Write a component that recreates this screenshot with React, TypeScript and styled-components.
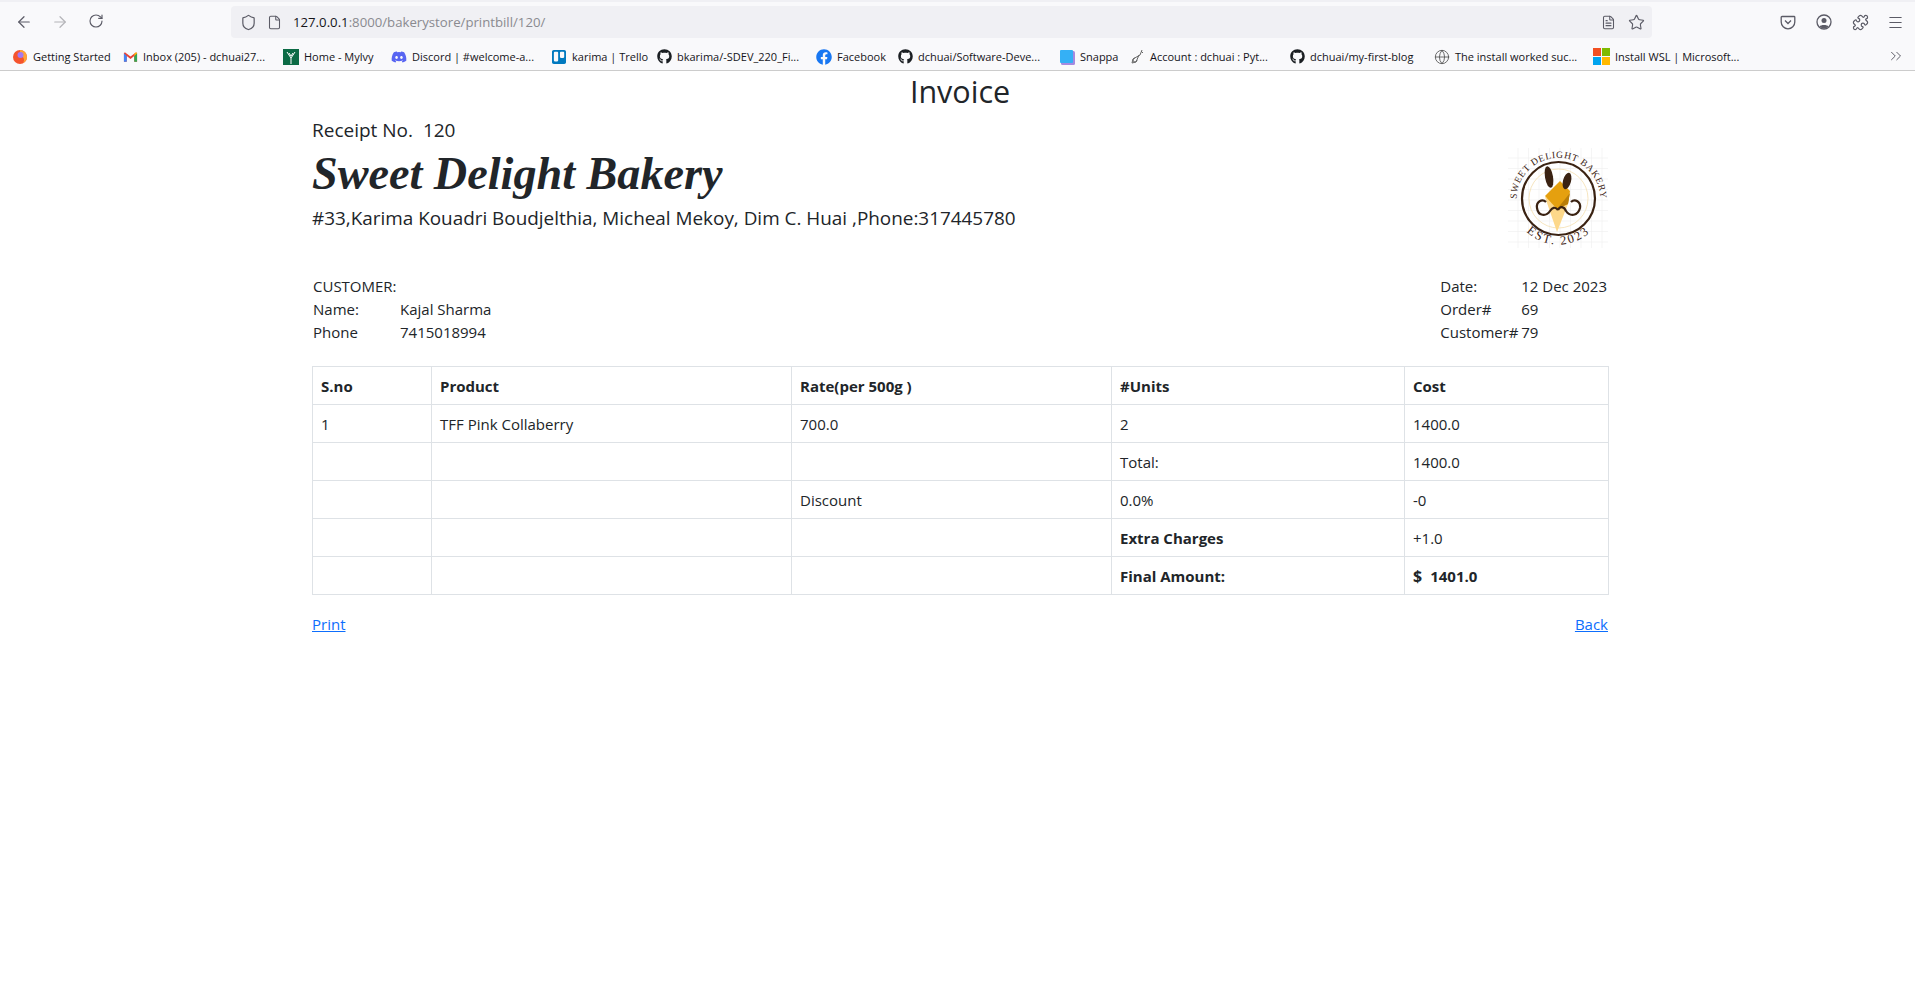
import React from "react";
import styled, { createGlobalStyle } from "styled-components";
import { ArrowLeft, ArrowRight, RotateCw, Shield, File, Star, Menu, ChevronsRight, Globe, Puzzle, FileText } from "lucide-react";
import { FaGithub, FaFacebook, FaDiscord, FaTrello } from "react-icons/fa";

const GlobalStyle = createGlobalStyle`
  html, body { margin: 0; padding: 0; background: #fff; }
  body { font-family: "Open Sans", "Noto Sans", sans-serif; color: #212529; }
`;

const Chrome = styled.div`
  background: #f9f9fb;
  border-bottom: 1px solid #ccc;
  height: 68px;
  border-top: 2px solid #f0f0f4;
  box-sizing: content-box;
`;

const Toolbar = styled.div`
  height: 39px;
  display: flex;
  align-items: center;
  padding-top: 1px;
  box-sizing: border-box;
`;

const NavIcon = styled.span<{ $dim?: boolean; $w?: number }>`
  width: ${(p) => p.$w ?? 36}px;
  display: flex;
  justify-content: center;
  color: ${(p) => (p.$dim ? "#b4b4b8" : "#5b5b66")};
`;

const NavGroup = styled.div`
  display: flex;
  width: 231px;
  padding-left: 6px;
  box-sizing: border-box;
`;

const UrlBar = styled.div`
  width: 1421px;
  height: 32px;
  background: #f0f0f4;
  border-radius: 4px;
  display: flex;
  align-items: center;
  padding: 0 2px 0 6px;
  box-sizing: border-box;
  color: #5b5b66;
`;

const UrlText = styled.span`
  font-size: 13.2px;
  margin-left: 4px;
  flex: 1;
  color: #15141a;
  span { color: #8a8a90; }
`;

const ToolGroup = styled.div`
  display: flex;
  margin-left: 118px;
`;

const BookmarkRow = styled.div`
  display: flex;
  align-items: center;
  height: 29px;
  padding: 2px 0 0 12px;
  box-sizing: border-box;
  position: relative;
`;

const Bookmark = styled.div<{ $w: number }>`
  display: flex;
  align-items: center;
  width: ${(p) => p.$w}px;
  font-size: 11px;
  color: #15141a;
  white-space: nowrap;
  svg { flex: none; margin-right: 5px; }
`;

const MoreButton = styled.span`
  position: absolute;
  right: 10px;
  top: 6px;
  color: #5b5b66;
`;

const Page = styled.main`
  width: 1296px;
  margin-left: 312px;
`;

const PageTitle = styled.h1`
  margin: 0;
  font-size: 30.5px;
  font-weight: 400;
  line-height: 41px;
  text-align: center;
`;

const Receipt = styled.div`
  font-size: 19px;
  line-height: 37px;
`;

const Masthead = styled.header`
  display: flex;
  justify-content: space-between;
  height: 126px;
`;

const Brand = styled.h2`
  margin: 0;
  font-family: "Liberation Serif", serif;
  font-style: italic;
  font-weight: 700;
  font-size: 46.2px;
  line-height: 50px;
`;

const Address = styled.p`
  margin: 0;
  font-size: 18.9px;
  line-height: 38px;
`;

const Info = styled.section`
  display: flex;
  justify-content: space-between;
  font-size: 15px;
  line-height: 23px;
  height: 91px;
  padding: 0 1px;
`;

const InfoGrid = styled.div<{ $label: number }>`
  display: grid;
  grid-template-columns: ${(p) => p.$label}px auto;
  align-content: start;
`;

const InfoHead = styled.div`
  grid-column: 1 / 3;
`;

const Table = styled.table`
  width: 1296px;
  border-collapse: collapse;
  table-layout: fixed;
  font-size: 15px;
  th, td {
    border: 1px solid #dee2e6;
    height: 38px;
    padding: 0 8px;
    box-sizing: border-box;
    text-align: left;
    font-weight: 400;
  }
  th, td.strong { font-weight: 700; }
`;

const Links = styled.div`
  display: flex;
  justify-content: space-between;
  margin-top: 18px;
  font-size: 15px;
  line-height: 22px;
  a { color: #0d6efd; }
`;

const Dollar = styled.span`
  font-size: 16px;
  margin-right: 8px;
`;

const Logo = () => (
  <svg width="100" height="100" viewBox="0 0 100 100" style={{ marginTop: -1 }}>
    <defs>
      <pattern id="g" width="10.5" height="10.5" patternUnits="userSpaceOnUse">
        <path d="M10.500 0V10.500H0" fill="none" stroke="#ececec" strokeWidth="1" />
      </pattern>
      <path id="top" d="M8.700 56A42 42 0 1 1 92.300 56" />
      <path id="bot" d="M8.500 69.300A46 46 0 0 0 92.500 69.300" />
    </defs>
    <rect width="100" height="100" fill="url(#g)" />
    <circle cx="50.500" cy="50.500" r="36.500" fill="none" stroke="#3a2212" strokeWidth="2.200" />
    <circle cx="50.500" cy="50.500" r="29.500" fill="none" stroke="#f7e6c0" strokeWidth="1" />
    <text fontFamily="Liberation Serif, serif" fontSize="9.5" fill="#3a2212" letterSpacing="0.7">
      <textPath href="#top" startOffset="50%" textAnchor="middle">SWEET DELIGHT BAKERY</textPath>
    </text>
    <text fontFamily="Liberation Serif, serif" fontSize="12.5" fill="#3a2212" letterSpacing="2">
      <textPath href="#bot" startOffset="50%" textAnchor="middle">EST. 2023</textPath>
    </text>
    <path d="M37 49L49 84L60 56Z" fill="#fdd88a" />
    <path d="M37 48L52 33L62 43L60 56L49 61Z" fill="#e5a00f" />
    <path d="M49 61L62 45L60 56Z" fill="#b97d08" />
    <ellipse cx="41" cy="29" rx="4" ry="11" transform="rotate(-10 41 29)" fill="#3a2212" />
    <ellipse cx="59" cy="33" rx="4" ry="8.500" transform="rotate(15 59 33)" fill="#3a2212" />
    <path d="M50 62C47 58 44 60 42 63C38 69 30 68 29 60C28 54 34 50 38 54" fill="none" stroke="#3a2212" strokeWidth="2.200" />
    <path d="M50 62C52 58 56 58 58 63C62 69 70 68 72 60C73 54 67 50 63 54" fill="none" stroke="#3a2212" strokeWidth="2.200" />
  </svg>
);

const FirefoxIcon = () => (
  <svg width="16" height="16" viewBox="0 0 16 16">
    <circle cx="8" cy="8" r="7" fill="#f5542e" />
    <path d="M8 1a7 7 0 0 1 7 7c0 3-2 5-4 6 2-3 1-7-3-7Z" fill="#ffa436" />
    <circle cx="8.500" cy="6" r="3" fill="#a678ef" />
  </svg>
);

const GmailIcon = () => (
  <svg width="15" height="16" viewBox="0 0 16 16">
    <path d="M1 4v9h3V7l4 3 4-3v6h3V4l-1-1-6 4.500L2 3Z" fill="#ea4335" />
    <path d="M1 4v9h3V7Z" fill="#4285f4" />
    <path d="M15 4v9h-3V7Z" fill="#34a853" />
    <path d="M12 7l3-3-1-1-2 1.500Z" fill="#fbbc04" />
  </svg>
);

const MylvyIcon = () => (
  <svg width="16" height="16" viewBox="0 0 16 16">
    <rect width="16" height="16" fill="#0c6b45" />
    <path d="M4 3l4 6 4-6M8 9v6M6 4l2 3 2-3" fill="none" stroke="#fff" strokeWidth="1" />
  </svg>
);

const SnappaIcon = () => (
  <svg width="16" height="16" viewBox="0 0 16 16">
    <rect x="2" y="2" width="14" height="14" rx="1.500" fill="#a58ae0" />
    <rect x="1" y="1" width="13" height="13" rx="1" fill="#35b0f5" />
  </svg>
);

const PypiIcon = () => (
  <svg width="16" height="16" viewBox="0 0 16 16" fill="none" stroke="#666" strokeWidth="1">
    <path d="M13 1l-2 5-7 4-1 4 4-1 3-7M12 2l2 2M6 9a2 2 0 1 0 2 2" />
  </svg>
);

const WindowsIcon = () => (
  <svg width="17" height="17" viewBox="0 0 17 17">
    <rect width="8" height="8" fill="#f25022" />
    <rect x="9" width="8" height="8" fill="#7fba00" />
    <rect y="9" width="8" height="8" fill="#00a4ef" />
    <rect x="9" y="9" width="8" height="8" fill="#ffb900" />
  </svg>
);

const PocketIcon = () => (
  <svg width="16" height="16" viewBox="0 0 16 16" fill="none" stroke="#5b5b66" strokeWidth="1.300">
    <path d="M2 2.500h12a.8.8 0 0 1 .8.8V8a6.800 6.800 0 0 1-13.600 0V3.300a.8.8 0 0 1 .8-.8Z" />
    <path d="M5 6.500l3 3 3-3" />
  </svg>
);

const AccountIcon = () => (
  <svg width="16" height="16" viewBox="0 0 16 16">
    <circle cx="8" cy="8" r="7" fill="none" stroke="#5b5b66" strokeWidth="1.300" />
    <circle cx="8" cy="6.500" r="2.500" fill="#5b5b66" />
    <path d="M3.500 12.500c1-2 8-2 9 0a6 6 0 0 1-9 0Z" fill="#5b5b66" />
  </svg>
);

const bookmarks: { icon: React.ReactNode; label: string; w: number }[] = [
  { icon: <FirefoxIcon />, label: "Getting Started", w: 111 },
  { icon: <GmailIcon />, label: "Inbox (205) - dchuai27...", w: 160 },
  { icon: <MylvyIcon />, label: "Home - Mylvy", w: 108 },
  { icon: <FaDiscord size={16} color="#5865f2" />, label: "Discord | #welcome-a...", w: 160 },
  { icon: <FaTrello size={16} color="#0079bf" />, label: "karima | Trello", w: 106 },
  { icon: <FaGithub size={15} color="#1b1f23" />, label: "bkarima/-SDEV_220_Fi...", w: 159 },
  { icon: <FaFacebook size={16} color="#1877f2" />, label: "Facebook", w: 82 },
  { icon: <FaGithub size={15} color="#1b1f23" />, label: "dchuai/Software-Deve...", w: 161 },
  { icon: <SnappaIcon />, label: "Snappa", w: 70 },
  { icon: <PypiIcon />, label: "Account : dchuai : Pyt...", w: 161 },
  { icon: <FaGithub size={15} color="#1b1f23" />, label: "dchuai/my-first-blog", w: 144 },
  { icon: <Globe size={16} color="#555" strokeWidth={1.3} />, label: "The install worked suc...", w: 159 },
  { icon: <WindowsIcon />, label: "Install WSL | Microsoft...", w: 150 },
];

const columns = [119, 360, 320, 293, 204];

const rows: { cells: string[]; strong?: boolean; total?: boolean }[] = [
  { cells: ["1", "TFF Pink Collaberry", "700.0", "2", "1400.0"] },
  { cells: ["", "", "", "Total:", "1400.0"] },
  { cells: ["", "", "Discount", "0.0%", "-0"] },
  { cells: ["", "", "", "Extra Charges", "+1.0"], strong: true },
  { cells: ["", "", "", "Final Amount:", "1401.0"], strong: true, total: true },
];

const App = () => (
  <>
    <GlobalStyle />
    <Chrome>
      <Toolbar>
        <NavGroup>
          <NavIcon><ArrowLeft size={18} strokeWidth={1.6} /></NavIcon>
          <NavIcon $dim><ArrowRight size={18} strokeWidth={1.6} /></NavIcon>
          <NavIcon><RotateCw size={16} strokeWidth={1.7} /></NavIcon>
        </NavGroup>
        <UrlBar>
          <NavIcon $w={22}><Shield size={17} strokeWidth={1.7} /></NavIcon>
          <NavIcon $w={30}><File size={15} strokeWidth={1.7} /></NavIcon>
          <UrlText>127.0.0.1<span>:8000/bakerystore/printbill/120/</span></UrlText>
          <NavIcon $w={28}><FileText size={15} strokeWidth={1.7} /></NavIcon>
          <NavIcon $w={28}><Star size={17} strokeWidth={1.6} /></NavIcon>
        </UrlBar>
        <ToolGroup>
          <NavIcon><PocketIcon /></NavIcon>
          <NavIcon><AccountIcon /></NavIcon>
          <NavIcon><Puzzle size={17} strokeWidth={1.7} /></NavIcon>
          <NavIcon $w={34}><Menu size={17} strokeWidth={1.6} /></NavIcon>
        </ToolGroup>
      </Toolbar>
      <BookmarkRow>
        {bookmarks.map((b) => (
          <Bookmark key={b.label} $w={b.w}>
            {b.icon}
            {b.label}
          </Bookmark>
        ))}
        <MoreButton><ChevronsRight size={18} strokeWidth={1.3} /></MoreButton>
      </BookmarkRow>
    </Chrome>
    <Page>
      <PageTitle>Invoice</PageTitle>
      <Receipt>Receipt No.&nbsp; 120</Receipt>
      <Masthead>
        <div>
          <Brand>Sweet Delight Bakery</Brand>
          <Address>#33,Karima Kouadri Boudjelthia, Micheal Mekoy, Dim C. Huai ,Phone:317445780</Address>
        </div>
        <Logo />
      </Masthead>
      <Info>
        <InfoGrid $label={87}>
          <InfoHead>CUSTOMER:</InfoHead>
          <div>Name:</div>
          <div>Kajal Sharma</div>
          <div>Phone</div>
          <div>7415018994</div>
        </InfoGrid>
        <InfoGrid $label={81}>
          <div>Date:</div>
          <div>12 Dec 2023</div>
          <div>Order#</div>
          <div>69</div>
          <div>Customer#</div>
          <div>79</div>
        </InfoGrid>
      </Info>
      <Table>
        <colgroup>
          {columns.map((w, i) => (
            <col key={i} style={{ width: w }} />
          ))}
        </colgroup>
        <thead>
          <tr>
            <th>S.no</th>
            <th>Product</th>
            <th>Rate(per 500g )</th>
            <th>#Units</th>
            <th>Cost</th>
          </tr>
        </thead>
        <tbody>
          {rows.map((r, i) => (
            <tr key={i}>
              {r.cells.map((c, j) => (
                <td key={j} className={(r.strong && j === 3) || (r.total && j === 4) ? "strong" : undefined}>
                  {r.total && j === 4 && <Dollar>$</Dollar>}
                  {c}
                </td>
              ))}
            </tr>
          ))}
        </tbody>
      </Table>
      <Links>
        <a href="#print">Print</a>
        <a href="#back">Back</a>
      </Links>
    </Page>
  </>
);

export default App;
